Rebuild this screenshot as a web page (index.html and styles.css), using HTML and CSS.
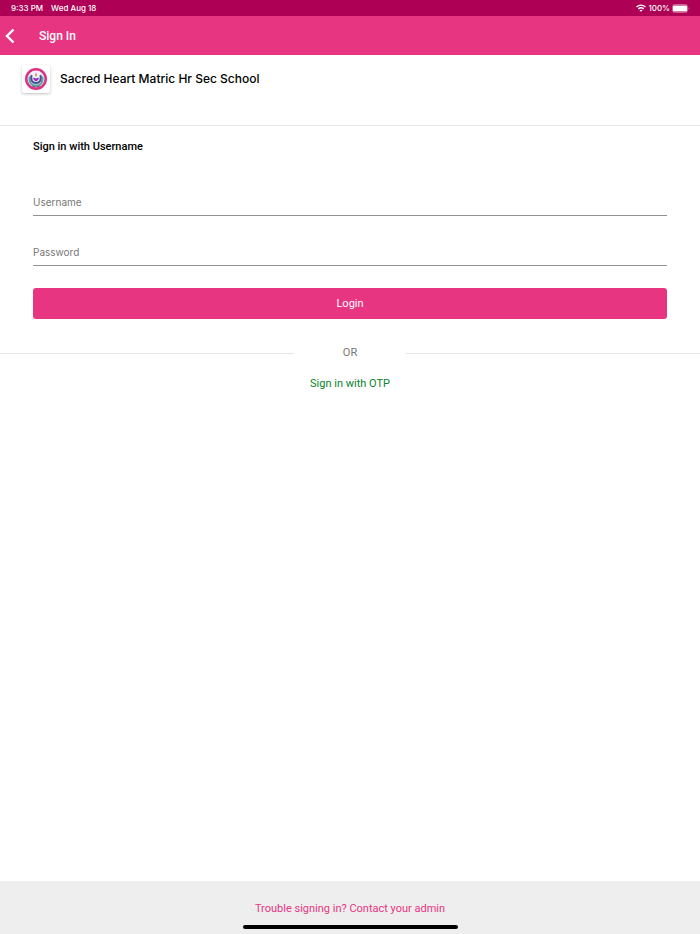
FILE: index.html
```html
<!DOCTYPE html>
<html lang="en">

<head>
    <meta charset="UTF-8">
    <meta name="viewport" content="width=device-width, initial-scale=1.0">
    <title>Sign In</title>
    <link rel="stylesheet" href="styles.css">
</head>

<body>
    <div class="status-bar">
        <span>9:33 PM</span>
        <span>Wed Aug 18</span>
        <div class="status-right">
            <svg class="wifi" viewBox="0 0 20 16" aria-hidden="true">
                <path d="M1 6Q10-1.5 19 6M4.7 9.8Q10 5.4 15.3 9.8" fill="none" stroke="#fff" stroke-width="2.8" />
                <path d="M10 15.5 6.8 12.4Q10 10.2 13.2 12.4Z" fill="#fff" />
            </svg>
            <span>100%</span>
            <svg class="battery" viewBox="0 0 18 9" aria-hidden="true">
                <rect x="0.5" y="0.5" width="15" height="8" rx="2" fill="none" stroke="#cc5e95" />
                <rect x="1" y="1.5" width="14" height="6" rx="1" fill="#fff" />
                <path d="M16.6 3Q18 4.5 16.6 6Z" fill="#d680aa" />
            </svg>
        </div>
    </div>

    <header class="head">
        <button class="back" aria-label="Back">
            <svg viewBox="0 0 10 16" aria-hidden="true">
                <path d="M8.5 1.5 2 8l6.5 6.5" fill="none" stroke="#fff" stroke-width="2.4" />
            </svg>
        </button>
        <h1 class="title">Sign In</h1>
    </header>

    <section class="school">
        <div class="logo">
            <svg viewBox="0 0 44 44" aria-hidden="true">
                <circle cx="22" cy="22" r="19.5" fill="#eef2f8" stroke="#df2f80" stroke-width="5" />
                <path d="M9 17Q7 35 22 35Q37 35 35 17" fill="none" stroke="#5aa69b" stroke-width="4" />
                <path d="M13 14Q10 30 22 30Q34 30 31 14" fill="none" stroke="#47529d" stroke-width="4" />
                <path d="M16 20Q19 19 22 21Q25 19 28 20Q27 26 22 27Q17 26 16 20Z" fill="#a02fc4" />
                <path d="M22 9Q25 13 22 18Q19 13 22 9Z" fill="#e8683f" />
                <path d="M14 36Q22 40 30 36" fill="none" stroke="#6f5a8c" stroke-width="2" />
            </svg>
        </div>
        <h2>Sacred Heart Matric Hr Sec School</h2>
    </section>

    <main>
        <form class="login-form">
            <h3>Sign in with Username</h3>
            <input type="text" placeholder="Username" aria-label="Username" autocomplete="username">
            <input type="password" placeholder="Password" aria-label="Password" autocomplete="current-password">
            <button class="login" type="submit">Login</button>
        </form>
        <div class="divider">OR</div>
        <a class="otp" href="#">Sign in with OTP</a>
    </main>

    <footer>
        <a href="#">Trouble signing in? Contact your admin</a>
        <div class="home-bar"></div>
    </footer>
</body>

</html>
```
FILE: styles.css
```css
* {
    box-sizing: border-box;
    margin: 0;
    padding: 0;
}

body {
    min-height: 100vh;
    display: flex;
    flex-direction: column;
    background-color: #fff;
    font-family: Roboto, "Liberation Sans", sans-serif;
    font-size: 11px;
}

a {
    text-decoration: none;
}

button {
    border: none;
    font-family: inherit;
    cursor: pointer;
}

.status-bar {
    height: 16px;
    padding: 0 10px 0 11px;
    display: flex;
    align-items: center;
    gap: 8px;
    background-color: #ae0055;
    color: white;
    font-family: Inter, "Liberation Sans", sans-serif;
    font-size: 8px;
    font-weight: 500;
}

.status-right {
    margin-left: auto;
    display: flex;
    align-items: center;
    gap: 2px;
}

.wifi {
    width: 10px;
    height: 8px;
}

.battery {
    width: 18px;
    height: 9px;
}

.head {
    height: 39px;
    padding: 0 5px;
    display: flex;
    align-items: center;
    gap: 24px;
    background-color: #e73582;
    color: white;
}

.back {
    display: flex;
    background: none;
}

.back svg {
    width: 10px;
    height: 16px;
}

.title {
    font-size: 12px;
    font-weight: 500;
}

.school {
    height: 71px;
    padding: 10px 22px;
    display: flex;
    align-items: flex-start;
    gap: 10px;
    border-bottom: 1px solid #e6e6e6;
}

.school h2 {
    font-family: Inter, "Liberation Sans", sans-serif;
    font-size: 12px;
    font-weight: 500;
    line-height: 28px;
}

.logo {
    width: 28px;
    height: 28px;
    padding: 3px;
    border-radius: 2px;
    background-color: white;
    box-shadow: 0 1px 3px rgba(0, 0, 0, 0.25);
}

.logo svg {
    display: block;
    width: 22px;
    height: 22px;
}

main {
    flex: 1;
    display: flex;
    flex-direction: column;
}

.login-form {
    padding: 12px 33px 0;
    display: flex;
    flex-direction: column;
}

.login-form h3 {
    margin-bottom: 32px;
    font-size: 11px;
    font-weight: 500;
    line-height: 18px;
}

.login-form input {
    height: 28px;
    margin-bottom: 22px;
    border: none;
    border-bottom: 1px solid #929292;
    border-radius: 0;
    outline: none;
    font-family: Inter, "Liberation Sans", sans-serif;
    font-size: 10px;
}

.login-form input::placeholder {
    color: #777;
}

.login {
    height: 31px;
    border-radius: 3px;
    background-color: #e73582;
    color: white;
    font-size: 11px;
}

.divider {
    margin-top: 25px;
    display: grid;
    grid-template-columns: 1fr 112px 1fr;
    align-items: center;
    color: #777;
    line-height: 18px;
    text-align: center;
}

.divider::before,
.divider::after {
    content: "";
    height: 1px;
    background-color: #e6e6e6;
}

.otp {
    align-self: center;
    margin-top: 13px;
    color: #08832c;
    line-height: 18px;
}

footer {
    height: 53px;
    padding: 19px 0 5px;
    display: flex;
    flex-direction: column;
    align-items: center;
    justify-content: space-between;
    background-color: #eee;
}

footer a {
    color: #e73582;
    line-height: 18px;
}

.home-bar {
    width: 215px;
    height: 4px;
    border-radius: 2px;
    background-color: black;
}
```
